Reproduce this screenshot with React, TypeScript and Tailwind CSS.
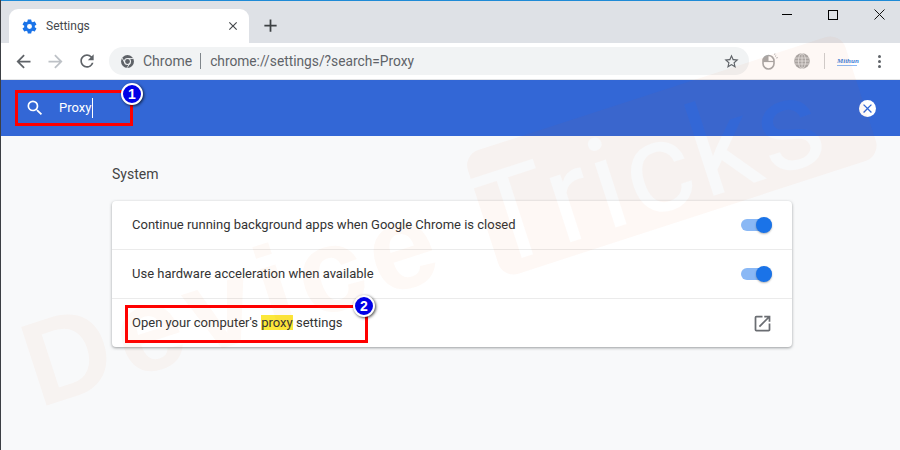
function MaterialIcon({ d, size, fill, className }: { d: string; size: number; fill: string; className?: string }) {
  return (
    <svg width={size} height={size} viewBox="0 0 24 24" fill={fill} className={className}>
      <path d={d} />
    </svg>
  )
}

const GEAR =
  'M19.43 12.98c.04-.32.07-.64.07-.98s-.03-.66-.07-.98l2.11-1.65c.19-.15.24-.42.12-.64l-2-3.46c-.12-.22-.39-.3-.61-.22l-2.49 1c-.52-.4-1.08-.73-1.69-.98l-.38-2.65A.488.488 0 0 0 14 2h-4c-.25 0-.46.18-.49.42l-.38 2.65c-.61.25-1.17.59-1.69.98l-2.49-1c-.23-.09-.49 0-.61.22l-2 3.46c-.13.22-.07.49.12.64l2.11 1.65c-.04.32-.07.65-.07.98s.03.66.07.98l-2.11 1.65c-.19.15-.24.42-.12.64l2 3.46c.12.22.39.3.61.22l2.49-1c.52.4 1.08.73 1.69.98l.38 2.65c.03.24.24.42.49.42h4c.25 0 .46-.18.49-.42l.38-2.65c.61-.25 1.17-.59 1.69-.98l2.49 1c.23.09.49 0 .61-.22l2-3.46c.12-.22.07-.49-.12-.64l-2.11-1.65zM12 15.5a3.5 3.5 0 1 1 0-7 3.5 3.5 0 0 1 0 7z'
const CLOSE = 'M19 6.41 17.59 5 12 10.59 6.41 5 5 6.41 10.59 12 5 17.59 6.41 19 12 13.41 17.59 19 19 17.59 13.41 12z'
const PLUS = 'M19 13h-6v6h-2v-6H5v-2h6V5h2v6h6v2z'
const BACK = 'M20 11H7.83l5.59-5.59L12 4l-8 8 8 8 1.41-1.41L7.83 13H20v-2z'
const FORWARD = 'M12 4l-1.41 1.41L16.17 11H4v2h12.17l-5.58 5.59L12 20l8-8z'
const RELOAD =
  'M17.65 6.35A7.958 7.958 0 0 0 12 4c-4.42 0-7.99 3.58-7.99 8s3.57 8 7.99 8c3.73 0 6.84-2.55 7.73-6h-2.08A5.99 5.99 0 0 1 12 18c-3.31 0-6-2.69-6-6s2.69-6 6-6c1.66 0 3.14.69 4.22 1.78L13 11h7V4l-2.35 2.35z'
const STAR =
  'M22 9.24l-7.19-.62L12 2 9.19 8.63 2 9.24l5.46 4.73L5.82 21 12 17.27 18.18 21l-1.63-7.03L22 9.24zM12 15.4l-3.76 2.27 1-4.28-3.32-2.88 4.38-.38L12 6.1l1.71 4.04 4.38.38-3.32 2.88 1 4.28L12 15.4z'
const SEARCH =
  'M15.5 14h-.79l-.28-.27A6.471 6.471 0 0 0 16 9.5 6.5 6.5 0 1 0 9.5 16c1.61 0 3.09-.59 4.23-1.57l.27.28v.79l5 4.99L20.49 19l-4.99-5zm-6 0C7.01 14 5 11.99 5 9.5S7.01 5 9.5 5 14 7.01 14 9.5 11.99 14 9.5 14z'
const OPEN_NEW = 'M19 19H5V5h7V3H5a2 2 0 0 0-2 2v14a2 2 0 0 0 2 2h14c1.1 0 2-.9 2-2v-7h-2v7zM14 3v2h3.59l-9.83 9.83 1.41 1.41L19 6.41V10h2V3h-7z'

function ChromeMark() {
  return (
    <svg width="13" height="13" viewBox="0 0 24 24">
      <circle cx="12" cy="12" r="12" fill="#5f6368" />
      <circle cx="12" cy="12" r="5.5" fill="#5f6368" stroke="#f1f3f4" strokeWidth="2" />
      <path d="M12 6.5h11M7.2 14.8 2 5.5M16.8 14.8 11 23.8" stroke="#f1f3f4" strokeWidth="1.6" fill="none" />
    </svg>
  )
}

function MouseIcon() {
  return (
    <svg width="17" height="17" viewBox="0 0 17 17" fill="none">
      <rect x="1" y="2.5" width="11" height="13.5" rx="5.5" stroke="#a8a8a8" strokeWidth="1.6" />
      <path d="M6.5 2.5A5.5 5.5 0 0 0 1 8h5.5V2.5z" fill="#a8a8a8" />
      <path d="M1 8.5h11" stroke="#a8a8a8" strokeWidth="1.2" />
      <path d="M13 3.5l1.2-1M14.2 5l1.6-.4M12.6 1.8l.3-1.3" stroke="#a8a8a8" strokeWidth="0.9" />
    </svg>
  )
}

function GlobeIcon() {
  return (
    <svg width="16" height="16" viewBox="0 0 16 16" fill="none" className="ml-[15px]">
      <circle cx="8" cy="8" r="7.8" fill="#a8a8a8" />
      <ellipse cx="8" cy="8" rx="3.6" ry="7.6" stroke="#ececec" strokeWidth="0.7" />
      <path d="M8 0v16M.8 5h14.4M.8 8h14.4M.8 11h14.4" stroke="#ececec" strokeWidth="0.7" />
    </svg>
  )
}

function Badge({ n }: { n: number }) {
  return (
    <div className="flex h-[22px] w-[22px] items-center justify-center rounded-full border-[2px] border-white bg-[#0000e6] font-['Liberation_Sans',sans-serif] text-[14px] font-bold leading-none text-white shadow-[1px_1px_3px_rgba(0,0,0,0.7)]">
      {n}
    </div>
  )
}

function Toggle() {
  return (
    <div className="relative h-3 w-[31px] rounded-full bg-[#8ab8f5]">
      <div className="absolute right-0 top-[-2px] h-4 w-4 rounded-full bg-[#1a73e8] shadow-[0_1px_2px_rgba(0,0,0,0.3)]" />
    </div>
  )
}

// faint site logo across the page, the letters of "Tricks" are cut out of the block
function Watermark() {
  return (
    <svg width="900" height="450" viewBox="0 0 900 450" className="pointer-events-none absolute left-0 top-0 z-10">
      <defs>
        <mask id="tricks-cut" maskUnits="userSpaceOnUse" x="0" y="0" width="900" height="450">
          <rect width="900" height="450" fill="white" />
          <text
            x="490"
            y="268"
            transform="rotate(-18 490 268)"
            fontFamily="Roboto, sans-serif"
            fontSize="128"
            letterSpacing="3"
            fill="black"
          >
            Tricks
          </text>
        </mask>
      </defs>
      <text
        x="38"
        y="408"
        transform="rotate(-18 38 408)"
        fontFamily="'Liberation Sans', sans-serif"
        fontSize="120"
        fontWeight="700"
        letterSpacing="8"
        fill="#f26522"
        fillOpacity="0.04"
      >
        Device
      </text>
      <g mask="url(#tricks-cut)">
        <rect x="462" y="155" width="397" height="130" rx="16" transform="rotate(-18 462 155)" fill="#f26522" fillOpacity="0.045" />
      </g>
    </svg>
  )
}

export default function App() {
  return (
    <div className="relative h-[450px] w-[900px] overflow-hidden border-l border-[#3c3f44] bg-[#f8f9fa] font-['Roboto',Arial,sans-serif]">
      <Watermark />
      <div className="h-px bg-[#1e8ad6]" />

      {/* tab strip */}
      <div className="flex h-[42px] items-end bg-[#dee1e6] pl-2">
        <div className="flex h-[34px] w-[240px] items-center rounded-t-[9px] bg-white pl-[12px] pr-[9px]">
          <MaterialIcon d={GEAR} size={17} fill="#1a73e8" />
          <span className="ml-2 flex-1 text-[12px] text-[#45484c]">Settings</span>
          <MaterialIcon d={CLOSE} size={14} fill="#45484c" />
        </div>
        <MaterialIcon d={PLUS} size={21} fill="#3c4043" className="mb-[7px] ml-[11px]" />
        <div className="mb-[23px] ml-auto flex items-center gap-[36px] pr-[15px]">
          <div className="h-px w-[10px] bg-black" />
          <div className="h-[10px] w-[10px] border border-black" />
          <svg width="11" height="11" viewBox="0 0 11 11" stroke="#111" strokeWidth="1">
            <path d="M.5.5l10 10M10.5.5l-10 10" />
          </svg>
        </div>
      </div>

      {/* toolbar */}
      <div className="flex h-[37px] items-center border-b border-[#e3e4e6] bg-white pl-[12px] pr-[14px]">
        <MaterialIcon d={BACK} size={21} fill="#5f6368" />
        <MaterialIcon d={FORWARD} size={21} fill="#bdc1c6" className="ml-[11px]" />
        <MaterialIcon d={RELOAD} size={20} fill="#5f6368" className="ml-[11px]" />
        <div className="ml-[12px] flex h-7 w-[640px] items-center rounded-full bg-[#f1f3f4] pl-[12px] pr-[9px]">
          <ChromeMark />
          <span className="ml-[9px] text-[14px] text-[#5f6368]">Chrome</span>
          <span className="ml-[8px] mr-[9px] h-4 w-px bg-[#80868b]" />
          <span className="flex-1 text-[13.75px] text-[#5f6368]">chrome://settings/?search=Proxy</span>
          <MaterialIcon d={STAR} size={17} fill="#5f6368" />
        </div>
        <div className="ml-[13px] flex items-center">
          <MouseIcon />
          <GlobeIcon />
          <span className="ml-[14px] h-4 w-px bg-[#cfcfcf]" />
          <span className="ml-[12px] w-5 border-b border-[#8ab8f5] font-['Liberation_Serif',serif] text-[7px] font-bold italic leading-[8px] text-[#3f7fd8]">
            Mithun
          </span>
          <span className="ml-[21px] flex flex-col gap-[2px]">
            <i className="h-[3px] w-[3px] rounded-full bg-[#5f6368]" />
            <i className="h-[3px] w-[3px] rounded-full bg-[#5f6368]" />
            <i className="h-[3px] w-[3px] rounded-full bg-[#5f6368]" />
          </span>
        </div>
      </div>

      {/* search banner */}
      <div className="relative flex h-[56px] items-center bg-[#3367d6] pl-6 pr-6">
        <MaterialIcon d={SEARCH} size={20} fill="#fff" />
        <span className="ml-[14px] border-r border-white pr-px text-[13px] text-white">Proxy</span>
        <div className="absolute left-[14px] top-[10px] h-[36px] w-[118px] border-[3px] border-[#ff0000]" />
        <div className="absolute left-[120px] top-[3px]">
          <Badge n={1} />
        </div>
        <div className="ml-auto flex h-[17px] w-[17px] items-center justify-center rounded-full bg-white">
          <MaterialIcon d={CLOSE} size={15} fill="#3367d6" />
        </div>
      </div>

      {/* settings */}
      <div className="pl-[111px] pt-[31px]">
        <div className="text-[14px] leading-[15px] text-[#444]">System</div>
        <div className="relative mt-[19px] w-[680px] rounded bg-white text-[13px] text-[#333] shadow-[0_1px_3px_rgba(60,64,67,0.5)]">
          <div className="flex h-[49px] items-center justify-between border-b border-[#ebebeb] pl-5 pr-5">
            <span>Continue running background apps when Google Chrome is closed</span>
            <Toggle />
          </div>
          <div className="flex h-[49px] items-center justify-between border-b border-[#ebebeb] pl-5 pr-5">
            <span>Use hardware acceleration when available</span>
            <Toggle />
          </div>
          <div className="relative flex h-12 items-center justify-between pl-5 pr-[19px]">
            <span>
              Open your computer's <mark className="bg-[#fce83a] text-[#333]">proxy</mark> settings
            </span>
            <MaterialIcon d={OPEN_NEW} size={21} fill="#6a6d72" />
            <div className="absolute left-[13px] top-[6px] h-[38px] w-[243px] border-[3px] border-[#ff0000]" />
            <div className="absolute left-[241px] top-[-4px]">
              <Badge n={2} />
            </div>
          </div>
        </div>
      </div>
    </div>
  )
}
